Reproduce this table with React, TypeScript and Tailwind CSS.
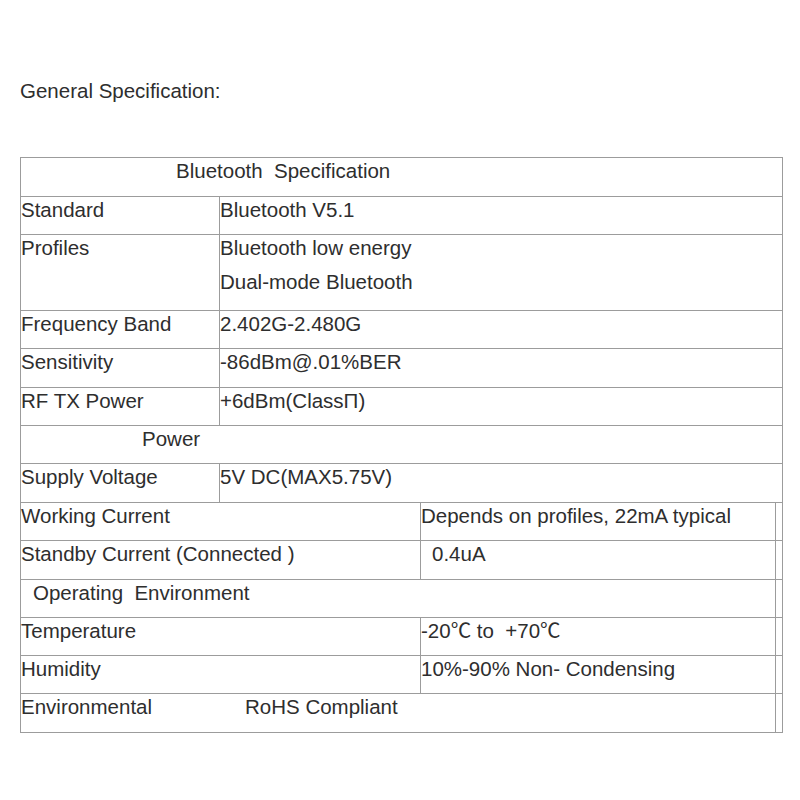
const FONT = "font-['Liberation_Sans','Noto_Sans_CJK_SC',Arial,sans-serif]";

type Pair = { label: string; value: string; h: string };

const upperRows: Pair[] = [
  { label: 'Standard', value: 'Bluetooth V5.1', h: 'h-[38px]' },
];

const radioRows: Pair[] = [
  { label: 'Frequency Band', value: '2.402G-2.480G', h: 'h-[38px]' },
  { label: 'Sensitivity', value: '-86dBm@.01%BER', h: 'h-[39px]' },
  { label: 'RF TX Power', value: '+6dBm(ClassΠ)', h: 'h-[38px]' },
];

function Row({ h, children }: { h: string; children: React.ReactNode }) {
  return <div className={`flex ${h} border-b border-[#9c9c9c] leading-6`}>{children}</div>;
}

function TwoCol({ label, value, h }: Pair) {
  return (
    <Row h={h}>
      <div className="w-[199px] border-r border-[#9c9c9c] pt-[1px]">{label}</div>
      <div className="flex-1 pt-[1px]">{value}</div>
    </Row>
  );
}

function WideCol({ label, value, h, valuePad = '' }: Pair & { valuePad?: string }) {
  return (
    <Row h={h}>
      <div className="w-[400px] border-r border-[#9c9c9c] pt-[1px]">{label}</div>
      <div className={`w-[355px] border-r border-[#9c9c9c] pt-[1px] whitespace-pre ${valuePad}`}>{value}</div>
    </Row>
  );
}

export default function App() {
  return (
    <div className={`w-[800px] h-[800px] bg-white text-[#2e2e2e] text-[20.5px] ${FONT}`}>
      <div className="pl-[20px] pt-[79px] leading-6">General Specification:</div>

      <div className="ml-[20px] mt-[54px] w-[763px] border-l border-t border-r border-[#9c9c9c]">
        <Row h="h-[39px]">
          <div className="pl-[155px] pt-[1px] whitespace-pre">Bluetooth  Specification</div>
        </Row>
        {upperRows.map((r) => (
          <TwoCol key={r.label} {...r} />
        ))}
        <Row h="h-[76px]">
          <div className="w-[199px] border-r border-[#9c9c9c] pt-[1px]">Profiles</div>
          <div className="flex-1 pt-[1px]">
            <div>Bluetooth low energy</div>
            <div className="mt-[10px]">Dual-mode Bluetooth</div>
          </div>
        </Row>
        {radioRows.map((r) => (
          <TwoCol key={r.label} {...r} />
        ))}
        <Row h="h-[38px]">
          <div className="pl-[121px] pt-[1px]">Power</div>
        </Row>
        <TwoCol label="Supply Voltage" value="5V DC(MAX5.75V)" h="h-[39px]" />

        <WideCol label="Working Current" value="Depends on profiles, 22mA typical" h="h-[38px]" />
        <WideCol label="Standby Current (Connected )" value="0.4uA" h="h-[39px]" valuePad="pl-[11px]" />
        <Row h="h-[38px]">
          <div className="w-[755px] border-r border-[#9c9c9c] pl-[12px] pt-[1px] whitespace-pre">Operating  Environment</div>
        </Row>
        <WideCol label="Temperature" value="-20℃ to  +70℃" h="h-[38px]" />
        <WideCol label="Humidity" value="10%-90% Non- Condensing" h="h-[38px]" />
        <Row h="h-[39px]">
          <div className="flex w-[755px] border-r border-[#9c9c9c] pt-[1px]">
            <div className="w-[224px]">Environmental</div>
            <div>RoHS Compliant</div>
          </div>
        </Row>
      </div>
    </div>
  );
}
